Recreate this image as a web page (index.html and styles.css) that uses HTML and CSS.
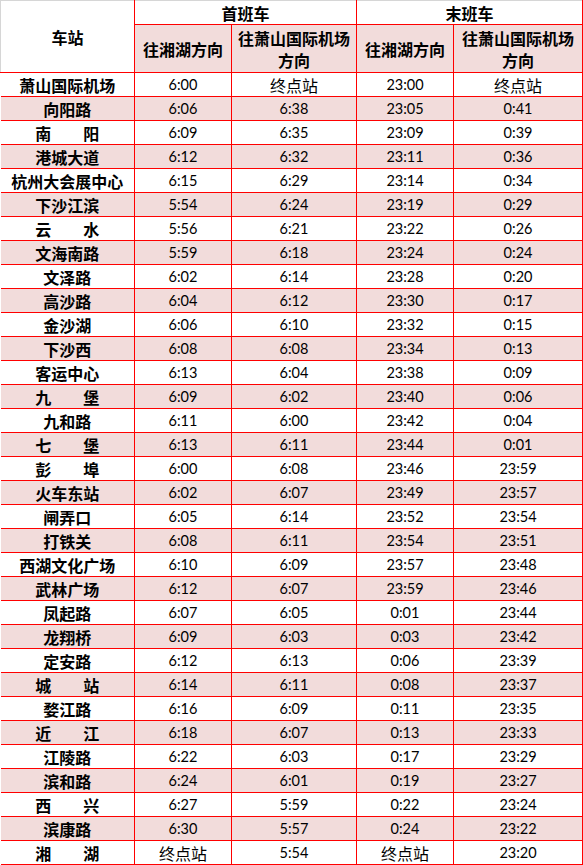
FILE: index.html
```html
<!DOCTYPE html>
<html lang="zh-CN">
<head>
<meta charset="utf-8">
<title>杭州地铁1号线首末班车时刻表</title>
<link rel="stylesheet" href="styles.css">
</head>
<body>
<table class="timetable">
  <colgroup>
    <col class="c-station">
    <col class="c-a">
    <col class="c-b">
    <col class="c-c">
    <col class="c-d">
  </colgroup>
  <thead>
    <tr class="h1">
      <th rowspan="2" class="corner">车站</th>
      <th colspan="2" class="top">首班车</th>
      <th colspan="2" class="top last">末班车</th>
    </tr>
    <tr class="h2">
      <th>往湘湖方向</th>
      <th><span class="ln">往萧山国际机场</span><span class="ln">方向</span></th>
      <th>往湘湖方向</th>
      <th class="last"><span class="ln">往萧山国际机场</span><span class="ln">方向</span></th>
    </tr>
  </thead>
  <tbody>
    <tr><td class="st">萧山国际机场</td><td>6:00</td><td class="end">终点站</td><td>23:00</td><td class="end last">终点站</td></tr>
    <tr><td class="st">向阳路</td><td>6:06</td><td>6:38</td><td>23:05</td><td class="last">0:41</td></tr>
    <tr><td class="st">南　　阳</td><td>6:09</td><td>6:35</td><td>23:09</td><td class="last">0:39</td></tr>
    <tr><td class="st">港城大道</td><td>6:12</td><td>6:32</td><td>23:11</td><td class="last">0:36</td></tr>
    <tr><td class="st">杭州大会展中心</td><td>6:15</td><td>6:29</td><td>23:14</td><td class="last">0:34</td></tr>
    <tr><td class="st">下沙江滨</td><td>5:54</td><td>6:24</td><td>23:19</td><td class="last">0:29</td></tr>
    <tr><td class="st">云　　水</td><td>5:56</td><td>6:21</td><td>23:22</td><td class="last">0:26</td></tr>
    <tr><td class="st">文海南路</td><td>5:59</td><td>6:18</td><td>23:24</td><td class="last">0:24</td></tr>
    <tr><td class="st">文泽路</td><td>6:02</td><td>6:14</td><td>23:28</td><td class="last">0:20</td></tr>
    <tr><td class="st">高沙路</td><td>6:04</td><td>6:12</td><td>23:30</td><td class="last">0:17</td></tr>
    <tr><td class="st">金沙湖</td><td>6:06</td><td>6:10</td><td>23:32</td><td class="last">0:15</td></tr>
    <tr><td class="st">下沙西</td><td>6:08</td><td>6:08</td><td>23:34</td><td class="last">0:13</td></tr>
    <tr><td class="st">客运中心</td><td>6:13</td><td>6:04</td><td>23:38</td><td class="last">0:09</td></tr>
    <tr><td class="st">九　　堡</td><td>6:09</td><td>6:02</td><td>23:40</td><td class="last">0:06</td></tr>
    <tr><td class="st">九和路</td><td>6:11</td><td>6:00</td><td>23:42</td><td class="last">0:04</td></tr>
    <tr><td class="st">七　　堡</td><td>6:13</td><td>6:11</td><td>23:44</td><td class="last">0:01</td></tr>
    <tr><td class="st">彭　　埠</td><td>6:00</td><td>6:08</td><td>23:46</td><td class="last">23:59</td></tr>
    <tr><td class="st">火车东站</td><td>6:02</td><td>6:07</td><td>23:49</td><td class="last">23:57</td></tr>
    <tr><td class="st">闸弄口</td><td>6:05</td><td>6:14</td><td>23:52</td><td class="last">23:54</td></tr>
    <tr><td class="st">打铁关</td><td>6:08</td><td>6:11</td><td>23:54</td><td class="last">23:51</td></tr>
    <tr><td class="st">西湖文化广场</td><td>6:10</td><td>6:09</td><td>23:57</td><td class="last">23:48</td></tr>
    <tr><td class="st">武林广场</td><td>6:12</td><td>6:07</td><td>23:59</td><td class="last">23:46</td></tr>
    <tr><td class="st">凤起路</td><td>6:07</td><td>6:05</td><td>0:01</td><td class="last">23:44</td></tr>
    <tr><td class="st">龙翔桥</td><td>6:09</td><td>6:03</td><td>0:03</td><td class="last">23:42</td></tr>
    <tr><td class="st">定安路</td><td>6:12</td><td>6:13</td><td>0:06</td><td class="last">23:39</td></tr>
    <tr><td class="st">城　　站</td><td>6:14</td><td>6:11</td><td>0:08</td><td class="last">23:37</td></tr>
    <tr><td class="st">婺江路</td><td>6:16</td><td>6:09</td><td>0:11</td><td class="last">23:35</td></tr>
    <tr><td class="st">近　　江</td><td>6:18</td><td>6:07</td><td>0:13</td><td class="last">23:33</td></tr>
    <tr><td class="st">江陵路</td><td>6:22</td><td>6:03</td><td>0:17</td><td class="last">23:29</td></tr>
    <tr><td class="st">滨和路</td><td>6:24</td><td>6:01</td><td>0:19</td><td class="last">23:27</td></tr>
    <tr><td class="st">西　　兴</td><td>6:27</td><td>5:59</td><td>0:22</td><td class="last">23:24</td></tr>
    <tr><td class="st">滨康路</td><td>6:30</td><td>5:57</td><td>0:24</td><td class="last">23:22</td></tr>
    <tr><td class="st">湘　　湖</td><td class="end">终点站</td><td>5:54</td><td class="end">终点站</td><td class="last">23:20</td></tr>
  </tbody>
</table>
</body>
</html>
```

FILE: styles.css
```css
html, body {
  margin: 0;
  padding: 0;
  background: #ffffff;
}

.timetable {
  border-collapse: collapse;
  table-layout: fixed;
  width: 582px;
  font-family: "Noto Sans CJK SC", sans-serif;
  color: #000000;
}

.c-station { width: 134px; }
.c-a { width: 97px; }
.c-b { width: 125px; }
.c-c { width: 97px; }
.c-d { width: 129px; }

.timetable th,
.timetable td {
  border: 1px solid #ff0000;
  padding: 0;
  text-align: center;
  vertical-align: middle;
  overflow: hidden;
  white-space: nowrap;
}

.timetable th {
  font-weight: 700;
  font-size: 16px;
  line-height: 20px;
}

.timetable th .ln {
  display: block;
  height: 22px;
  line-height: 22px;
}

.timetable .corner {
  border-top: 1px solid #d6d6d6;
  border-left: 1px solid #d6d6d6;
  background: #ffffff;
}

.timetable .top {
  border-top: 1px solid #d6d6d6;
}

.h1 {
  height: 24px;
}

.h2 {
  height: 48px;
  background: #f2dcdb;
}

.timetable tbody tr {
  height: 24px;
}

.timetable tbody tr:nth-child(even) {
  background: #f2dcdb;
}

.timetable td {
  font-family: "Lato", "Noto Sans", sans-serif;
  font-size: 14.5px;
  line-height: 18px;
}

.timetable td.st {
  font-family: "Noto Sans CJK SC", sans-serif;
  font-weight: 700;
  font-size: 16px;
  border-left: none;
}

.timetable td.end {
  font-family: "Noto Sans CJK SC", sans-serif;
  font-weight: 400;
  font-size: 16px;
}
```
